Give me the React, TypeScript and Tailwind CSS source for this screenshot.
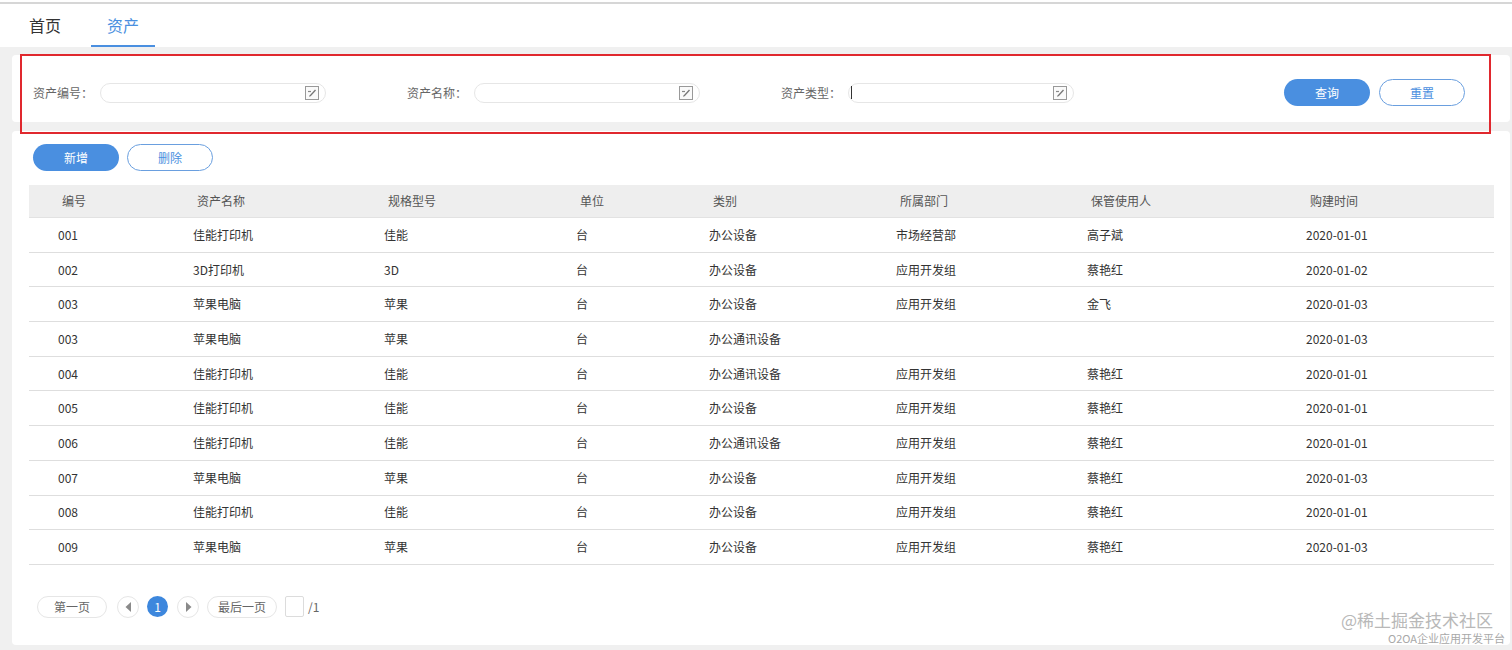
import React from "react";

const rows = [
  ["001", "佳能打印机", "佳能", "台", "办公设备", "市场经营部", "高子斌", "2020-01-01"],
  ["002", "3D打印机", "3D", "台", "办公设备", "应用开发组", "蔡艳红", "2020-01-02"],
  ["003", "苹果电脑", "苹果", "台", "办公设备", "应用开发组", "金飞", "2020-01-03"],
  ["003", "苹果电脑", "苹果", "台", "办公通讯设备", "", "", "2020-01-03"],
  ["004", "佳能打印机", "佳能", "台", "办公通讯设备", "应用开发组", "蔡艳红", "2020-01-01"],
  ["005", "佳能打印机", "佳能", "台", "办公设备", "应用开发组", "蔡艳红", "2020-01-01"],
  ["006", "佳能打印机", "佳能", "台", "办公通讯设备", "应用开发组", "蔡艳红", "2020-01-01"],
  ["007", "苹果电脑", "苹果", "台", "办公设备", "应用开发组", "蔡艳红", "2020-01-03"],
  ["008", "佳能打印机", "佳能", "台", "办公设备", "应用开发组", "蔡艳红", "2020-01-01"],
  ["009", "苹果电脑", "苹果", "台", "办公设备", "应用开发组", "蔡艳红", "2020-01-03"],
];

const headers = ["编号", "资产名称", "规格型号", "单位", "类别", "所属部门", "保管使用人", "购建时间"];

const cols = "grid grid-cols-[135px_191px_192px_133px_187px_191px_219px_1fr]";

function EditIcon() {
  return (
    <svg width="14" height="14" viewBox="0 0 14 14" className="shrink-0">
      <rect x="0.5" y="0.5" width="13" height="13" fill="#fafafa" stroke="#999" strokeWidth="1" />
      <path d="M3 5.5 H6" stroke="#888" strokeWidth="1.2" />
      <path d="M5 10 L10.5 4" stroke="#777" strokeWidth="1.3" />
      <path d="M4.5 10.5 L5.5 9" stroke="#777" strokeWidth="1" />
    </svg>
  );
}

function Field({ label, cursor }: { label: string; cursor?: boolean }) {
  return (
    <div className="flex items-center w-[374px] shrink-0">
      <span className="text-[12px] text-[#666] w-[67px] shrink-0">{label}</span>
      <div className="flex items-center w-[226px] h-[20px] rounded-full border border-[#e6e6e6] bg-white pl-[2px] pr-[6px]">
        <div className="flex-1 flex items-center">
          {cursor && <span className="block w-px h-[13px] bg-[#333]" />}
        </div>
        <EditIcon />
      </div>
    </div>
  );
}

function Tri({ dir }: { dir: "l" | "r" }) {
  return (
    <svg width="9" height="12" viewBox="0 0 9 12">
      {dir === "l" ? <path d="M7 1 L1.5 6 L7 11 Z" fill="#8a8a8a" /> : <path d="M2 1 L7.5 6 L2 11 Z" fill="#8a8a8a" />}
    </svg>
  );
}

export default function App() {
  return (
    <div className="relative min-h-[650px] bg-[#f0f0f0] font-['Noto_Sans_CJK_SC','Noto_Sans',sans-serif] overflow-hidden">
      {/* top tab bar */}
      <div className="bg-white">
        <div className="h-[2px] bg-white" />
        <div className="h-[2px] bg-[#d6d6d6]" />
        <div className="flex pl-[13px] gap-[14px] h-[43px]">
          <div className="px-4 flex items-center text-[16px] text-[#333] pb-[2px]">首页</div>
          <div className="px-4 flex items-center text-[16px] text-[#4a8fe0] border-b-2 border-[#4a8fe0]">资产</div>
        </div>
      </div>

      {/* search card */}
      <div className="mt-[8px] ml-[12px] mr-[2px] bg-white rounded-[4px] h-[67px] pt-[24px] pl-[21px] pr-[45px] flex items-start">
        <div className="flex items-center h-[27px]">
          <Field label="资产编号：" />
          <Field label="资产名称：" />
          <Field label="资产类型：" cursor />
        </div>
        <div className="ml-auto flex gap-[9px]">
          <button className="w-[86px] h-[27px] rounded-full bg-[#4a8fe0] text-white text-[12px]">查询</button>
          <button className="w-[86px] h-[27px] rounded-full border border-[#6a9fdf] bg-white text-[#4a8fe0] text-[12px]">重置</button>
        </div>
      </div>

      {/* table card */}
      <div className="mt-[9px] ml-[12px] mr-[2px] bg-white rounded-[4px] h-[514px] pt-[13px] pl-[17px] pr-[16px]">
        <div className="flex gap-[8px] pl-[4px]">
          <button className="w-[86px] h-[27px] rounded-full bg-[#4a8fe0] text-white text-[12px]">新增</button>
          <button className="w-[86px] h-[27px] rounded-full border border-[#6a9fdf] bg-white text-[#4a8fe0] text-[12px]">删除</button>
        </div>
        <div className="mt-[14px]">
          <div className={`${cols} h-[33px] items-center bg-[#eeeeee] border-b border-[#e2e2e2]`}>
            {headers.map((h) => (
              <div key={h} className="pl-[33px] text-[12px] text-[#555]">{h}</div>
            ))}
          </div>
          {rows.map((r, i) => (
            <div key={i} className={`${cols} h-[34.7px] items-center border-b border-[#dedede]`}>
              {r.map((c, j) => (
                <div key={j} className="pl-[29px] text-[12px] text-[#333] whitespace-nowrap">{c}</div>
              ))}
            </div>
          ))}
        </div>
        <div className="mt-[31px] flex items-center pl-[8px] text-[12px]">
          <div className="w-[70px] h-[22px] rounded-full border border-[#e6e6e6] flex items-center justify-center text-[#666]">第一页</div>
          <div className="ml-[10px] w-[22px] h-[22px] rounded-full border border-[#e6e6e6] flex items-center justify-center"><Tri dir="l" /></div>
          <div className="ml-[8px] w-[21px] h-[21px] rounded-full bg-[#3d87dd] flex items-center justify-center text-white text-[12px]">1</div>
          <div className="ml-[9px] w-[22px] h-[22px] rounded-full border border-[#e6e6e6] flex items-center justify-center"><Tri dir="r" /></div>
          <div className="ml-[8px] w-[70px] h-[22px] rounded-full border border-[#e6e6e6] flex items-center justify-center text-[#666]">最后一页</div>
          <div className="ml-[8px] w-[19px] h-[21px] border border-[#dcdcdc] rounded-[2px]" />
          <span className="ml-[4px] text-[#666]">/1</span>
        </div>
      </div>

      {/* watermark */}
      <div className="absolute right-[7px] bottom-[6px] text-right pointer-events-none">
        <div className="pr-[12px] text-[17px] leading-[18px] text-[#b8b8b8]">@稀土掘金技术社区</div>
        <div className="mt-[3px] text-[11px] leading-[12px] text-[#a8a8a8]">O2OA企业应用开发平台</div>
      </div>

      {/* red annotation rectangle */}
      <div className="absolute left-[20px] top-[54px] w-[1471px] h-[80px] border-2 border-[#e0282e] pointer-events-none" />
    </div>
  );
}
